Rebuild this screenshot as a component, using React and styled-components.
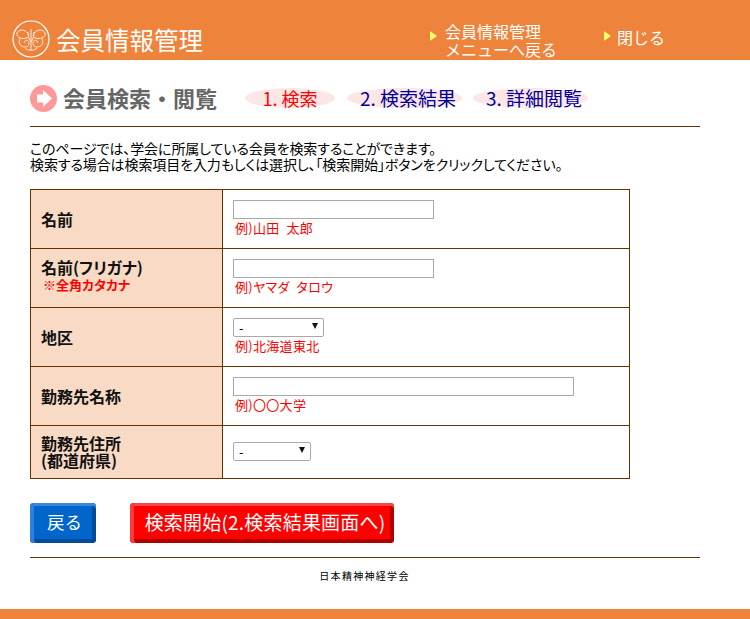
import React from "react";
import styled, { createGlobalStyle } from "styled-components";

const Global = createGlobalStyle`
  html, body { margin: 0; padding: 0; background: #fff; }
  body { font-family: "Noto Sans CJK JP", "Liberation Sans", sans-serif; color: #000; }
`;
const Page = styled.div`width: 750px; height: 619px; display: flex; flex-direction: column; overflow: hidden;`;
const Header = styled.header`height: 60px; flex: none; background: #ee833b; display: flex;`;
const Brand = styled.div`display: flex; align-items: flex-end; gap: 6px; padding: 0 0 2px 12px; width: 430px; box-sizing: border-box; flex: none;`;
const BrandTitle = styled.div`color: #fff; font-size: 24.5px; line-height: 36px; height: 36px; white-space: nowrap;`;
const NavItem = styled.div`display: flex; align-items: center; color: #fff; font-size: 16px; line-height: 18px; padding-top: 16px; height: 40px; width: ${p => p.$w}px; flex: none;`;
const NavText = styled.div`margin-top: ${p => p.$top}px; white-space: nowrap;`;
const Arrow = styled.span`width: 0; height: 0; flex: none; border-left: 7px solid #ffff66; border-top: 5px solid transparent; border-bottom: 5px solid transparent; margin-right: ${p => p.$gap}px;`;
const Main = styled.main`padding: 0 50px 0 30px; flex: 1;`;
const TitleRow = styled.div`display: flex; align-items: center; height: 66px; border-bottom: 1px solid #663300; margin-bottom: 13px;`;
const Circle = styled.svg`width: 27px; height: 27px; flex: none; margin: 10px 6px 0 0;`;
const PageTitle = styled.h1`margin: 7px 28px 0 0; width: 154px; flex: none; font-size: 22px; line-height: 28px; font-weight: 700; color: #666; white-space: nowrap;`;
const Steps = styled.div`display: flex; margin-top: 10px;`;
const Step = styled.div`width: ${p => p.$w}px; height: 20px; box-sizing: border-box; padding-left: ${p => p.$active ? 0 : 7}px; margin-right: ${p => p.$gap}px; border-radius: 50%; background: #fde6e6; color: ${p => p.$active ? "#ff0000" : "#000099"}; font-size: ${p => p.$active ? 18 : 19}px; line-height: 20px; text-align: center; white-space: nowrap; flex: none;`;
const Intro = styled.p`margin: 0 0 17px; font-size: 14px; line-height: 16px; white-space: nowrap; letter-spacing: -0.1px; font-feature-settings: "palt";`;
const FormTable = styled.table`border-collapse: collapse; width: 600px; table-layout: fixed;`;
const Row = styled.tr`height: ${p => p.$h}px;`;
const Label = styled.th`width: 181px; background: #f9dac4; border: 1px solid #663300; padding: 0 0 ${p => p.$lift || 0}px 10px; text-align: left; font-size: 16px; line-height: 17px; font-weight: 700; color: #111; font-feature-settings: "palt";`;
const Note = styled.div`color: #ff0000; font-size: 13px; line-height: 18px; font-weight: 700; padding-left: 2px;`;
const Field = styled.td`border: 1px solid #663300; padding: ${p => p.$top}px 0 0 10px; vertical-align: top;`;
const TextInput = styled.input`display: block; width: ${p => p.$w}px; height: 19px; box-sizing: border-box; border: 1px solid #a9a9a9; margin: 0; padding: 0 2px; background: #fff; outline: none;`;
const Drop = styled.div`display: flex; justify-content: space-between; align-items: center; width: ${p => p.$w}px; height: 19px; box-sizing: border-box; border: 1px solid #a9a9a9; border-radius: 2px; padding: 0 5px; font-size: 13px; background: #fff;`;
const Caret = styled.span`width: 0; height: 0; border-top: 6px solid #111; border-left: 3.5px solid transparent; border-right: 3.5px solid transparent; margin-top: -3px;`;
const Example = styled.div`color: #ff0000; font-size: 13px; line-height: 16px; margin-top: 1px; padding-left: 2px; letter-spacing: 0.3px; white-space: pre; font-feature-settings: "palt";`;
const Actions = styled.div`display: flex; gap: 34px; margin-top: 24px;`;
const Btn = styled.button`width: ${p => p.$w}px; height: 40px; box-sizing: border-box; border: 0; border-radius: 4px; padding: 0 0 3px ${p => p.$red ? 6 : 3}px; color: #fff; font-family: inherit; font-size: ${p => p.$red ? 19 : 17.5}px; letter-spacing: ${p => p.$red ? 0.2 : 0}px; white-space: nowrap; background: ${p => p.$red ? "#ff0000" : "#0066cc"}; box-shadow: ${p => p.$red
  ? "inset 5px 0 0 -1px #ff3a3a, inset 0 4px 0 -1px #ff4545, inset -5px 0 0 -1px #b00000, inset 0 -5px 0 -1px #b00000"
  : "inset 5px 0 0 -1px #2f80d8, inset 0 4px 0 -1px #3a88dc, inset -5px 0 0 -1px #004c99, inset 0 -5px 0 -1px #004c99"};`;
const Rule = styled.hr`border: 0; border-top: 1px solid #663300; margin: 14px 0 0;`;
const Footer = styled.div`font-size: 10px; line-height: 14px; letter-spacing: 1.3px; text-align: center; margin-top: 11px; width: 669px;`;
const BottomBar = styled.div`height: 10px; flex: none; background: #ee833b;`;

const Logo = () => (
  <svg width="38" height="38" viewBox="0 0 38 38" fill="none" stroke="#fff">
    <circle cx="19" cy="19" r="18" strokeWidth="1.2" />
    <g strokeWidth="1" opacity="0.85">
      <path d="M17 16C15 9 8 9 5.500 12c-2 3 1 6.500 5.500 6.500 3 0 5-.5 6-2.500z" />
      <path d="M21 16c2-7 9-7 11.500-4 2 3-1 6.500-5.500 6.500-3 0-5-.5-6-2.500z" />
      <path d="M8 18.500c-2 4 0 8.500 5 8.500 4 0 5-4 3-6-2-2-4 0-3 2" />
      <path d="M30 18.500c2 4 0 8.500-5 8.500-4 0-5-4-3-6 2-2 4 0 3 2" />
      <path d="M19 9v21M16 12c0 4 1 8 3 10 2-2 3-6 3-10" />
      <path d="M13 28c2 3 10 3 12 0" />
    </g>
  </svg>
);

const rows = [
  { label: "名前", w: 201, example: "例)山田\u2002太郎" },
  { label: "名前(フリガナ)", note: "※全角カタカナ", w: 201, lift: 4, example: "例)ヤマダ\u2002タロウ" },
  { label: "地区", drop: 91, example: "例)北海道東北" },
  { label: "勤務先名称", w: 341, example: "例)〇〇大学" },
];

export default function App() {
  return (
    <Page>
      <Global />
      <Header>
        <Brand><Logo /><BrandTitle>会員情報管理</BrandTitle></Brand>
        <NavItem $w={174}><Arrow $gap={8} /><NavText $top={8}>会員情報管理<br />メニューへ戻る</NavText></NavItem>
        <NavItem $w={80}><Arrow $gap={6} /><NavText $top={2}>閉じる</NavText></NavItem>
      </Header>
      <Main>
        <TitleRow>
          <Circle viewBox="0 0 27 27">
            <circle cx="13.5" cy="13.5" r="13.5" fill="#ff9999" />
            <path d="M7 9.5h6V5l9 8.5-9 8.5v-4.500H7z" fill="#fff" />
          </Circle>
          <PageTitle>会員検索・閲覧</PageTitle>
          <Steps>
            <Step $w={90} $gap={12} $active>1. 検索</Step>
            <Step $w={115} $gap={11}>2. 検索結果</Step>
            <Step $w={115} $gap={0}>3. 詳細閲覧</Step>
          </Steps>
        </TitleRow>
        <Intro>
          このページでは、学会に所属している会員を検索することができます。<br />
          検索する場合は検索項目を入力もしくは選択し、「検索開始」ボタンをクリックしてください。
        </Intro>
        <FormTable>
          <tbody>
            {rows.map(r => (
              <Row $h={59} key={r.label}>
                <Label $lift={r.lift}>{r.label}{r.note && <Note>{r.note}</Note>}</Label>
                <Field $top={10}>
                  {r.drop ? <Drop $w={r.drop}>-<Caret /></Drop> : <TextInput $w={r.w} />}
                  <Example>{r.example}</Example>
                </Field>
              </Row>
            ))}
            <Row $h={53}>
              <Label>勤務先住所<br />(都道府県)</Label>
              <Field $top={16}><Drop $w={78}>-<Caret /></Drop></Field>
            </Row>
          </tbody>
        </FormTable>
        <Actions>
          <Btn $w={66}>戻る</Btn>
          <Btn $w={264} $red>検索開始(2.検索結果画面へ)</Btn>
        </Actions>
        <Rule />
        <Footer>日本精神神経学会</Footer>
      </Main>
      <BottomBar />
    </Page>
  );
}
